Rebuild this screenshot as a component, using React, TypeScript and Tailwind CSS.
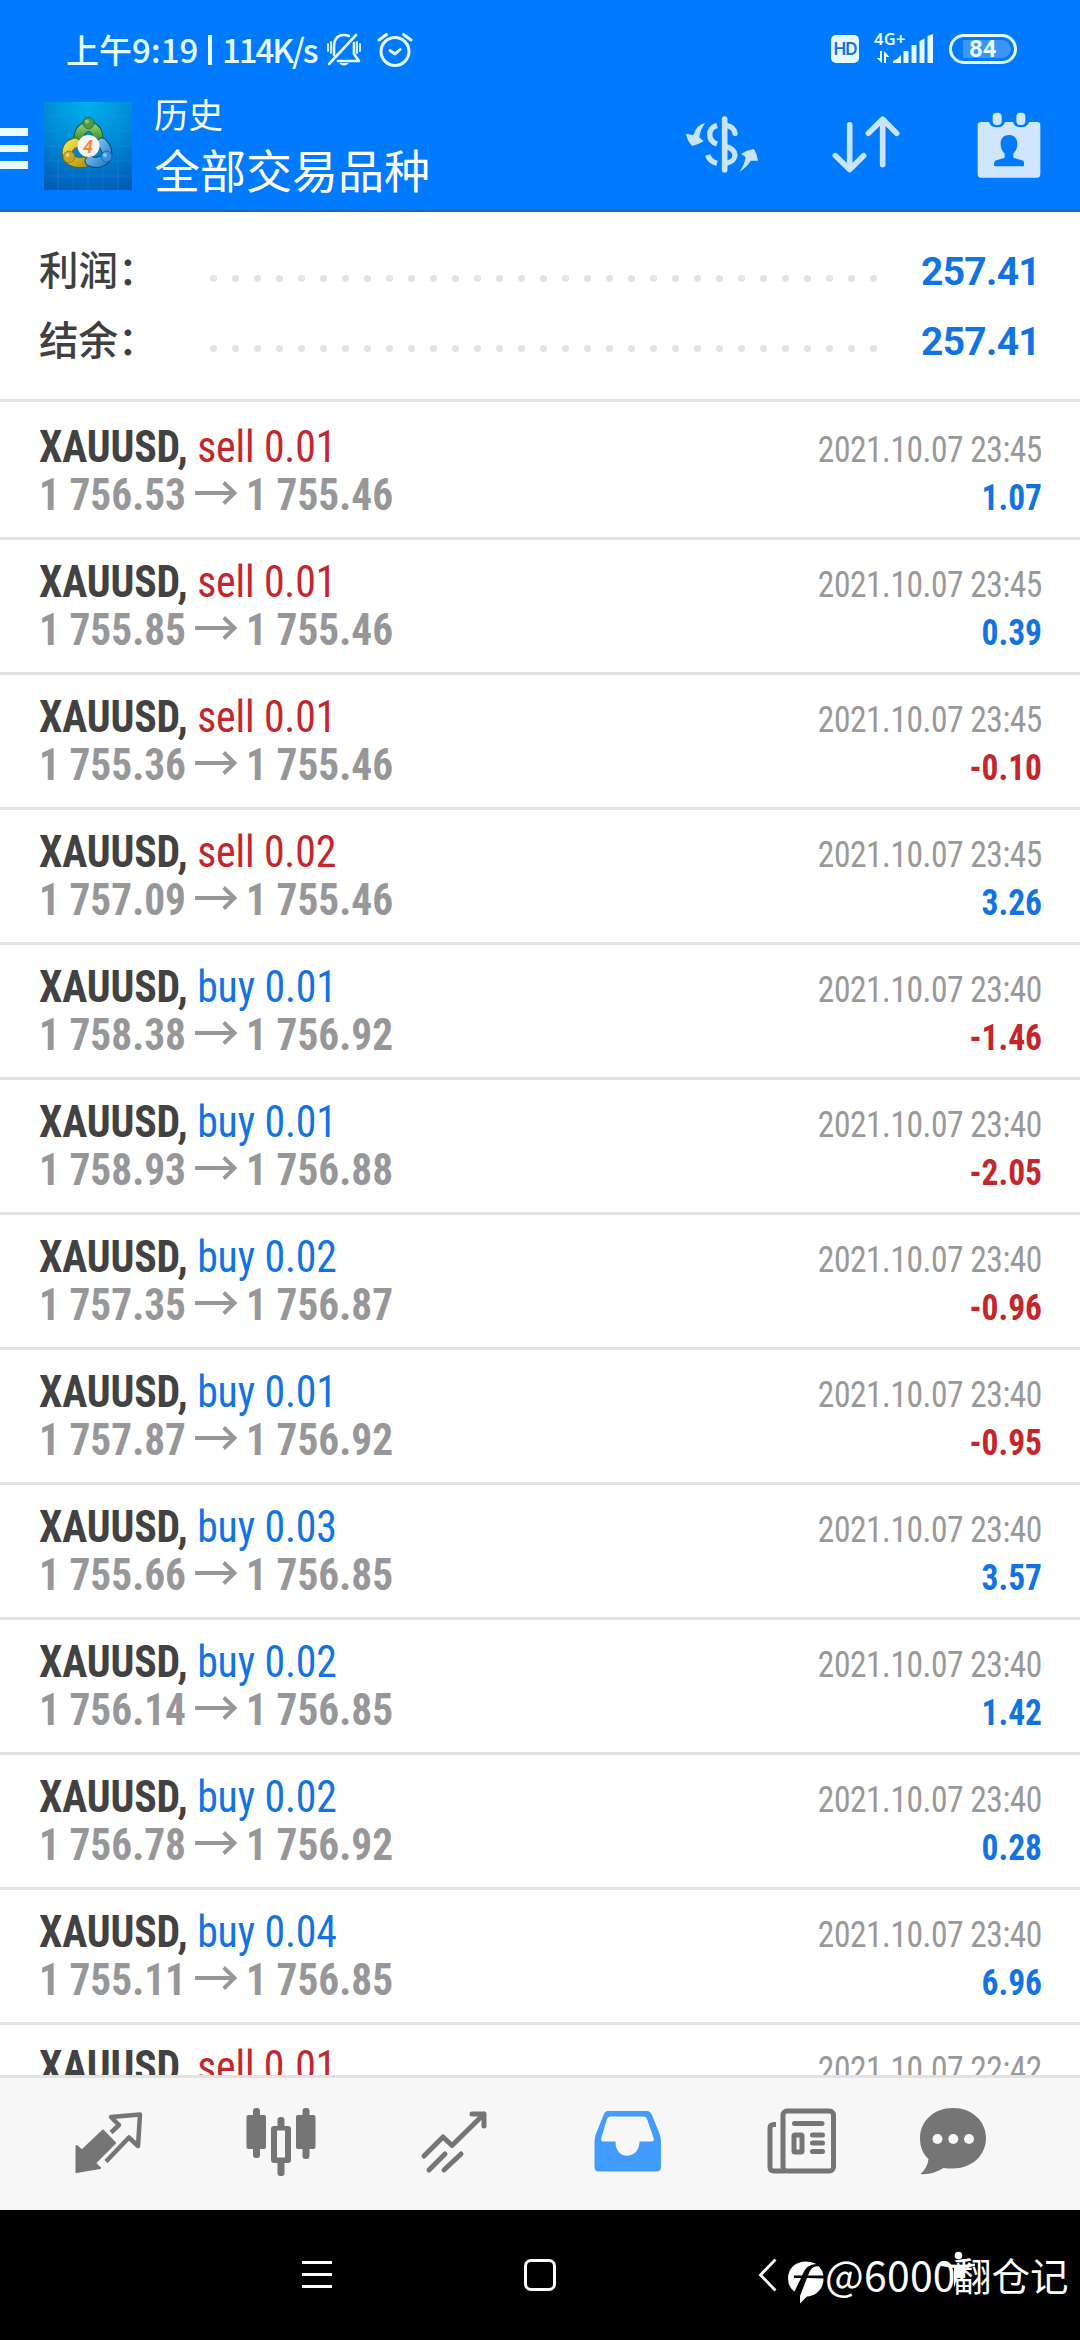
import React from "react";

type Deal = {
  side: "sell" | "buy";
  volume: string;
  open: string;
  close: string;
  time: string;
  profit: string;
};

const deals: Deal[] = [
  { side: "sell", volume: "0.01", open: "1 756.53", close: "1 755.46", time: "2021.10.07 23:45", profit: "1.07" },
  { side: "sell", volume: "0.01", open: "1 755.85", close: "1 755.46", time: "2021.10.07 23:45", profit: "0.39" },
  { side: "sell", volume: "0.01", open: "1 755.36", close: "1 755.46", time: "2021.10.07 23:45", profit: "-0.10" },
  { side: "sell", volume: "0.02", open: "1 757.09", close: "1 755.46", time: "2021.10.07 23:45", profit: "3.26" },
  { side: "buy", volume: "0.01", open: "1 758.38", close: "1 756.92", time: "2021.10.07 23:40", profit: "-1.46" },
  { side: "buy", volume: "0.01", open: "1 758.93", close: "1 756.88", time: "2021.10.07 23:40", profit: "-2.05" },
  { side: "buy", volume: "0.02", open: "1 757.35", close: "1 756.87", time: "2021.10.07 23:40", profit: "-0.96" },
  { side: "buy", volume: "0.01", open: "1 757.87", close: "1 756.92", time: "2021.10.07 23:40", profit: "-0.95" },
  { side: "buy", volume: "0.03", open: "1 755.66", close: "1 756.85", time: "2021.10.07 23:40", profit: "3.57" },
  { side: "buy", volume: "0.02", open: "1 756.14", close: "1 756.85", time: "2021.10.07 23:40", profit: "1.42" },
  { side: "buy", volume: "0.02", open: "1 756.78", close: "1 756.92", time: "2021.10.07 23:40", profit: "0.28" },
  { side: "buy", volume: "0.04", open: "1 755.11", close: "1 756.85", time: "2021.10.07 23:40", profit: "6.96" },
];

function StatusBar() {
  return (
    <div className="flex h-[98px] items-start pl-[66px] pr-[63px] text-[#e6fbff]">
      <div className="mt-[24px] flex w-[256px] items-center whitespace-nowrap font-['Noto_Sans_CJK_SC',sans-serif] text-[33px] font-medium leading-[50px]">
        <span className="w-[142px]">上午9:19</span>
        <span className="mt-[2px] h-[30px] w-[4px] shrink-0 bg-[#e6fbff]" />
        <span className="ml-[10px] tracking-[-2.1px]">114K/s</span>
      </div>
      <svg className="ml-[4px] mt-[32px] h-[36px] w-[36px]" viewBox="0 0 36 36" fill="none" stroke="currentColor" strokeWidth="2.6" strokeLinecap="round">
        <path d="M3 32L30 3" />
        <path d="M8 23V14C8 7 12 3 18 3Q21 3 23 4" />
        <path d="M28 11V22L33 29H12" strokeLinejoin="round" />
        <path d="M13 31Q18 36 23 31Z" fill="currentColor" stroke="none" />
        <path d="M2 12V19M5 10V21M31 10V21M34 12V19" strokeWidth="1.8" />
      </svg>
      <svg className="ml-[15px] mt-[32px] h-[36px] w-[36px]" viewBox="0 0 36 36" fill="none" stroke="currentColor" strokeWidth="3" strokeLinecap="round" strokeLinejoin="round">
        <circle cx="18" cy="19.5" r="14" />
        <path d="M13 18.5L18 22L23 17.5" />
        <path d="M2 8L9.500 2.500M34 8L26.500 2.500" />
      </svg>
      <div className="ml-auto mt-[35px] flex h-[28px] w-[28px] items-center justify-center rounded-[5px] bg-[#e6fbff] font-['Inter',sans-serif] text-[17px] font-semibold leading-[28px] tracking-[-1px] text-[#1673e0]">
        HD
      </div>
      <div className="ml-[15px] mt-[32px] grid h-[32px] w-[60px] grid-cols-[1fr] grid-rows-[1fr]">
        <span className="col-start-1 row-start-1 font-['Noto_Sans',sans-serif] text-[16.500px] font-semibold leading-[13px] tracking-[0.3px]">4G+</span>
        <svg className="col-start-1 row-start-1 h-[32px] w-[60px]" viewBox="0 0 60 32" fill="currentColor">
          <path d="M19 31V29Q24 27 27 23V31Z" />
          <rect x="29.500" y="19" width="5" height="12" />
          <rect x="37.500" y="13" width="5" height="18" />
          <path d="M45.500 9L50.500 6.500V31H45.500Z" />
          <path d="M53.500 4L59 2V31H53.500Z" />
          <path d="M6 19H8V31L2.500 26H6ZM10 31V19L15.500 25H12V31Z" />
        </svg>
      </div>
      <div className="ml-[15px] mt-[34px] flex h-[30px] w-[68px] items-center rounded-full border-[3px] border-[#e6fbff] pl-[11px]">
        <div className="flex h-[18px] w-[48px] items-center rounded-r-full bg-[#3b94fa] pl-[6px] font-['Roboto',sans-serif] text-[24px] font-bold leading-[18px]">84</div>
      </div>
    </div>
  );
}

function AppLogo() {
  return (
    <svg className="h-[88px] w-[88px]" viewBox="0 0 88 88">
      <defs>
        <radialGradient id="logoBg" cx="0.5" cy="0" r="1.05">
          <stop offset="0" stopColor="#00b2ea" />
          <stop offset="0.5" stopColor="#008ad8" />
          <stop offset="1" stopColor="#005cb6" />
        </radialGradient>
        <linearGradient id="green" x1="0" y1="0" x2="0" y2="1">
          <stop offset="0" stopColor="#8cc868" />
          <stop offset="1" stopColor="#2d8a36" />
        </linearGradient>
        <linearGradient id="yellow" x1="0" y1="0" x2="1" y2="1">
          <stop offset="0" stopColor="#efe04a" />
          <stop offset="1" stopColor="#b99a18" />
        </linearGradient>
        <linearGradient id="blue" x1="0" y1="0" x2="1" y2="1">
          <stop offset="0" stopColor="#8ccdf2" />
          <stop offset="1" stopColor="#2a80cc" />
        </linearGradient>
      </defs>
      <rect width="88" height="88" fill="url(#logoBg)" />
      <path d="M14 0V88M29 0V88M44 0V88M59 0V88M74 0V88M0 14H88M0 29H88M0 44H88M0 59H88M0 74H88" stroke="#2fa3e8" strokeWidth="0.7" opacity="0.35" />
      <g fill="none" strokeLinecap="round">
        <path d="M35 39Q34 27 44.500 24Q55 27 54 39" stroke="#1d5a30" strokeWidth="11" />
        <path d="M35 39Q34 27 44.500 24Q55 27 54 39" stroke="url(#green)" strokeWidth="9" />
        <path d="M31 41Q21 44 24 56Q31 62 41 60" stroke="#5e641e" strokeWidth="11" />
        <path d="M31 41Q21 44 24 56Q31 62 41 60" stroke="url(#yellow)" strokeWidth="9" />
        <path d="M58 41Q65 48 62 56Q55 63 46 59" stroke="#0c4c86" strokeWidth="11" />
        <path d="M58 41Q65 48 62 56Q55 63 46 59" stroke="url(#blue)" strokeWidth="9" />
      </g>
      <circle cx="44.500" cy="21" r="5.600" fill="#4e9c48" stroke="#206034" strokeWidth="0.8" />
      <circle cx="25" cy="55" r="5.800" fill="#c8a428" stroke="#86741c" strokeWidth="0.8" />
      <circle cx="62.500" cy="54.500" r="5.400" fill="#3a92dc" stroke="#155c9c" strokeWidth="0.8" />
      <circle cx="43" cy="19.500" r="2" fill="#a6dc8c" opacity="0.7" />
      <circle cx="23.500" cy="53" r="2" fill="#f6e88a" opacity="0.7" />
      <circle cx="61" cy="53" r="2" fill="#a8dcfa" opacity="0.7" />
      <circle cx="44.500" cy="44" r="11" fill="#f7f3ee" />
      <text x="44" y="50.500" textAnchor="middle" fontFamily="Roboto" fontSize="18" fontWeight="700" fontStyle="italic" fill="#f08a3c">4</text>
    </svg>
  );
}

function AppBar() {
  return (
    <div className="flex h-[112px] items-start pr-[39px]">
      <div className="mt-[30px] flex w-[28px] flex-col gap-[9px]">
        <span className="h-[7.500px] bg-[#eafaff]" />
        <span className="h-[7.500px] bg-[#eafaff]" />
        <span className="h-[7.500px] bg-[#eafaff]" />
      </div>
      <div className="ml-[16px] mt-[4px]">
        <AppLogo />
      </div>
      <div className="ml-[22px] whitespace-nowrap font-['Noto_Sans_CJK_SC',sans-serif] text-white">
        <div className="-mt-[10px] h-[50px] text-[34.500px] leading-[50px]">历史</div>
        <div className="text-[46px] leading-[60px]">全部交易品种</div>
      </div>
      <svg className="ml-auto mt-[16px] h-[60px] w-[74px]" viewBox="135 342 222 180" fill="#c8e4ff" stroke="none">
        <path d="M196 369Q172 372 160 405L138 401Q143 425 157 438Q178 432 191 424L178 412Q181 388 196 369Z" />
        <path d="M298 516Q322 500 332 482L354 482Q350 458 341 447Q320 450 303 462L317 471Q313 496 298 516Z" />
        <g fill="none" stroke="#c8e4ff" strokeLinecap="round">
          <path d="M254 357V509" strokeWidth="17" />
          <path d="M231 376C202 384 202 422 231 432" strokeWidth="16" strokeLinecap="butt" />
          <path d="M203 465Q208 484 231 490" strokeWidth="16" strokeLinecap="butt" />
          <path d="M258 376Q282 380 285 400" strokeWidth="16" />
          <path d="M258 440C292 448 296 482 258 490" strokeWidth="16" />
        </g>
      </svg>
      <svg className="ml-[73px] mt-[16px] h-[60px] w-[68px]" viewBox="573 342 204 186" preserveAspectRatio="none" fill="none" stroke="#c8e4ff" strokeWidth="17" strokeLinecap="round" strokeLinejoin="round">
        <path d="M626 375V514M583 471L626 514L668 471" />
        <path d="M725 499V358M682 402L725 358L767 402" />
      </svg>
      <svg className="ml-[77px] mt-[13px] h-[68px] w-[64px]" viewBox="1008 333 192 204" fill="#d0e6ff">
        <path fillRule="evenodd" d="M1020 366H1044Q1048 382 1068 382Q1088 382 1092 366H1116Q1120 382 1140 382Q1160 382 1164 366H1188Q1198 366 1198 376V522Q1198 533 1188 533H1020Q1010 533 1010 522V376Q1010 366 1020 366ZM1104 405C1086 405 1079 418 1079 432C1079 446 1086 456 1091 461V473L1062 482Q1058 490 1060 499H1148Q1151 490 1147 482L1117 473V461C1122 456 1129 446 1129 432C1129 418 1122 405 1104 405Z" />
        <rect x="1055" y="338" width="27" height="37" rx="12" />
        <rect x="1126" y="338" width="27" height="37" rx="12" />
      </svg>
    </div>
  );
}

function SummaryRow({ label, value }: { label: string; value: string }) {
  return (
    <div className="flex h-[70px] items-start pl-[39px] pr-[40px]">
      <span className="-mt-[3px] w-[171px] whitespace-nowrap font-['Noto_Sans_CJK_SC',sans-serif] text-[39.500px] font-medium leading-[70px] text-[#404040]">{label}</span>
      <span className="mt-[39px] flex w-[667px] justify-between">
        {Array.from({ length: 31 }, (_, i) => (
          <span key={i} className="h-[7px] w-[7px] rounded-full bg-[#e2e2e2]" />
        ))}
      </span>
      <span className="ml-auto font-['Roboto',sans-serif] text-[39px] font-bold leading-[72px] tracking-[-0.7px] text-[#1274e4]">{value}</span>
    </div>
  );
}

function DealRow({ deal }: { deal: Deal }) {
  return (
    <div className="flex h-[135px] shrink-0 justify-between whitespace-nowrap border-b-[3px] border-[#e2e2e2] pl-[39px] pr-[38px] font-['Roboto_Condensed','Roboto',sans-serif] [font-stretch:75%]">
      <div className="pt-[18px] text-[44px] leading-[48px]">
        <div className="origin-left scale-x-[0.95] font-bold tracking-[-0.15px] text-[#424242]">
          XAUUSD,{" "}
          <span className={deal.side === "sell" ? "font-normal text-[#c4262c]" : "font-normal text-[#1274e4]"}>
            {deal.side} {deal.volume}
          </span>
        </div>
        <div className="flex origin-left scale-x-[0.94] font-bold text-[#97979a]">
          <span>{deal.open}</span>
          <svg className="ml-[10px] mr-[9px] mt-[10px] h-[24px] w-[45px]" viewBox="0 0 45 24" fill="none" stroke="currentColor" strokeWidth="4">
            <path d="M0 12H42M30.500 1.500L42 12L30.500 22.500" />
          </svg>
          <span>{deal.close}</span>
        </div>
      </div>
      <div className="flex flex-col items-end pt-[21px] text-[36px] leading-[48px]">
        <div className="origin-right scale-x-[0.93] tracking-[-0.5px] text-[#999999]">{deal.time}</div>
        <div className={deal.profit.startsWith("-") ? "origin-right scale-x-[0.93] font-bold text-[#c4262c]" : "origin-right scale-x-[0.93] font-bold text-[#1274e4]"}>{deal.profit}</div>
      </div>
    </div>
  );
}

/* The last row is only partly scrolled into view, so just its first line is rendered. */
function PartialDealRow() {
  return (
    <div className="flex h-[50px] shrink-0 justify-between overflow-hidden whitespace-nowrap pl-[39px] pr-[38px] font-['Roboto_Condensed','Roboto',sans-serif] [font-stretch:75%]">
      <div className="origin-left scale-x-[0.95] pt-[18px] text-[44px] font-bold leading-[48px] tracking-[-0.15px] text-[#424242]">
        XAUUSD, <span className="font-normal text-[#c4262c]">sell 0.01</span>
      </div>
      <div className="origin-right scale-x-[0.93] pt-[21px] text-[36px] leading-[48px] tracking-[-0.5px] text-[#999999]">2021.10.07 22:42</div>
    </div>
  );
}

function TabBar() {
  return (
    <div className="flex h-[135px] shrink-0 items-start border-t-[3px] border-[#e2e2e2] bg-[#f7f7f7] text-[#757575]">
      <svg className="ml-[73px] mt-[30px] h-[72px] w-[72px]" viewBox="0 0 72 72" fill="none" stroke="currentColor" strokeLinejoin="round">
        <path fill="currentColor" strokeWidth="2" d="M3.500 64V38L9 42.500L30 22.500L42 35L22 55L27 60Z" />
        <path strokeWidth="4.500" d="M38 24.500L46 17L38 9L67 6.500L65 38L56 29.500L33 53.500" />
      </svg>
      <svg className="ml-[99px] mt-[30px] h-[72px] w-[74px]" viewBox="0 0 74 72" fill="currentColor">
        <rect x="2.500" y="7" width="19.500" height="34" rx="2" />
        <rect x="9" y="0" width="7" height="50" rx="3" />
        <rect x="52" y="7" width="19.500" height="34" rx="2" />
        <rect x="58.500" y="0" width="7" height="51" rx="3" />
        <path fillRule="evenodd" d="M30 18H44Q47 18 47 21V52Q47 55 44 55H30Q27 55 27 52V21Q27 18 30 18ZM33 22.500V49.500H41V22.500Z" />
        <rect x="33.500" y="9" width="7" height="12" rx="3" />
        <rect x="33.500" y="52" width="7" height="16" rx="3" />
      </svg>
      <svg className="ml-[101px] mt-[30px] h-[68px] w-[70px]" viewBox="0 0 70 68" fill="none" stroke="currentColor" strokeWidth="5" strokeLinecap="round" strokeLinejoin="round">
        <path d="M5 48L24 29L33 37.500L65 6M53 6H65V18" />
        <path d="M26 46L10 62M42 46L25 62" />
      </svg>
      <svg className="ml-[105px] mt-[33px] h-[61px] w-[67px]" viewBox="0 0 67 61" fill="#429bff">
        <path fillRule="evenodd" d="M13 0H54Q57 1 58 4L66 24Q67 28 67 32V56Q67 60.500 62 60.500H5Q0.500 60.500 0.500 56V32Q0.500 28 1.500 24L9.500 4Q10.500 1 13 0ZM16 5.500Q14 5.500 13 8L7 28Q7 30.500 9 30.500H21.500C21 50 45.500 49 45.500 30.500H58Q60 30.500 60 28L53 8Q52 5.500 50 5.500Z" />
      </svg>
      <svg className="ml-[105px] mt-[30px] h-[68px] w-[71px]" viewBox="0 0 71 68" fill="none" stroke="currentColor" strokeWidth="5" strokeLinecap="round" strokeLinejoin="round">
        <rect x="17" y="3" width="50.500" height="60" rx="4" />
        <path d="M10 16.500H8Q4 16.500 4 20V59Q4 63 8 63H19" strokeLinecap="butt" />
        <path d="M28.500 15.500H56M46.500 27H56.500M46.500 35H56.500M46.500 43.500H56.500" />
        <rect x="28" y="27" width="8" height="17" rx="1" />
      </svg>
      <svg className="ml-[82px] mt-[30px] h-[68px] w-[68px]" viewBox="0 0 68 68" fill="currentColor">
        <path d="M34 0C53 0 67 13 67 30C67 48 52 60.500 34 60.500Q29 60.500 24.500 60C18 64 9 67 1.500 66Q8.500 60 9.500 51C4 46 1 39 1 30C1 13 15 0 34 0Z" />
        <circle cx="18.500" cy="31" r="5" fill="#f7f7f7" />
        <circle cx="34.300" cy="31" r="5" fill="#f7f7f7" />
        <circle cx="50" cy="31" r="5" fill="#f7f7f7" />
      </svg>
    </div>
  );
}

function NavBar() {
  return (
    <div className="flex h-[130px] shrink-0 items-start bg-black text-white">
      <div className="ml-[302px] mt-[51px] flex w-[30px] flex-col gap-[9px]">
        <span className="h-[3px] bg-white" />
        <span className="h-[3px] bg-white" />
        <span className="h-[3px] bg-white" />
      </div>
      <div className="ml-[192px] mt-[49px] h-[32px] w-[32px] rounded-[7px] border-[3px] border-white" />
      <svg className="ml-[202px] mt-[48px] h-[34px] w-[20px]" viewBox="0 0 20 34" fill="none" stroke="white" strokeWidth="2.800">
        <path d="M17.500 1.500L2.500 17L17.500 32.500" />
      </svg>
      <svg className="ml-[10px] mt-[51px] h-[43px] w-[36px]" viewBox="0 0 36 43" fill="white">
        <path d="M0 17.500C0 7 8 0.500 18 0.500Q24 0.500 28.500 3Q18 3 14 14.500H6V17H13L6.500 30.500Q0 26 0 17.500Z" />
        <path d="M31 5.500Q23 4 20 14.500H35.500Q34.500 9 31 5.500ZM35.500 17.500C35.500 28 28 35 19 35.500L12 42.500V35L19 17Z" />
      </svg>
      <div className="relative ml-[1px] mt-[35px] flex w-[243px] items-baseline whitespace-nowrap font-['Noto_Sans_CJK_SC',sans-serif] font-light leading-[56px]">
        <span className="w-[128px] font-normal text-[41px] tracking-[0.2px]">@6000</span>
        <span className="text-[38.500px] font-normal">翻仓记</span>
        <svg className="absolute left-[113px] top-[5px] h-[46px] w-[40px]" viewBox="0 0 40 46" fill="white">
          <circle cx="20.500" cy="5.500" r="3.800" />
          <path d="M3 13.500Q20 16 37 13.500V16L25 18V32L22 28H19L16 38V18L3 16Z" />
        </svg>
      </div>
    </div>
  );
}

export default function App() {
  return (
    <div className="flex h-[2340px] w-[1080px] flex-col overflow-hidden bg-white">
      <header className="h-[212px] shrink-0 border-b-2 border-[#1a66cc] bg-[#007aff]">
        <StatusBar />
        <AppBar />
      </header>
      <section className="h-[190px] shrink-0 border-b-[3px] border-[#e2e2e2] pt-[24px]">
        <SummaryRow label="利润：" value="257.41" />
        <SummaryRow label="结余：" value="257.41" />
      </section>
      <main className="flex h-[1673px] shrink-0 flex-col overflow-hidden pt-[3px]">
        {deals.map((deal, i) => (
          <DealRow key={i} deal={deal} />
        ))}
        <PartialDealRow />
      </main>
      <TabBar />
      <NavBar />
    </div>
  );
}
